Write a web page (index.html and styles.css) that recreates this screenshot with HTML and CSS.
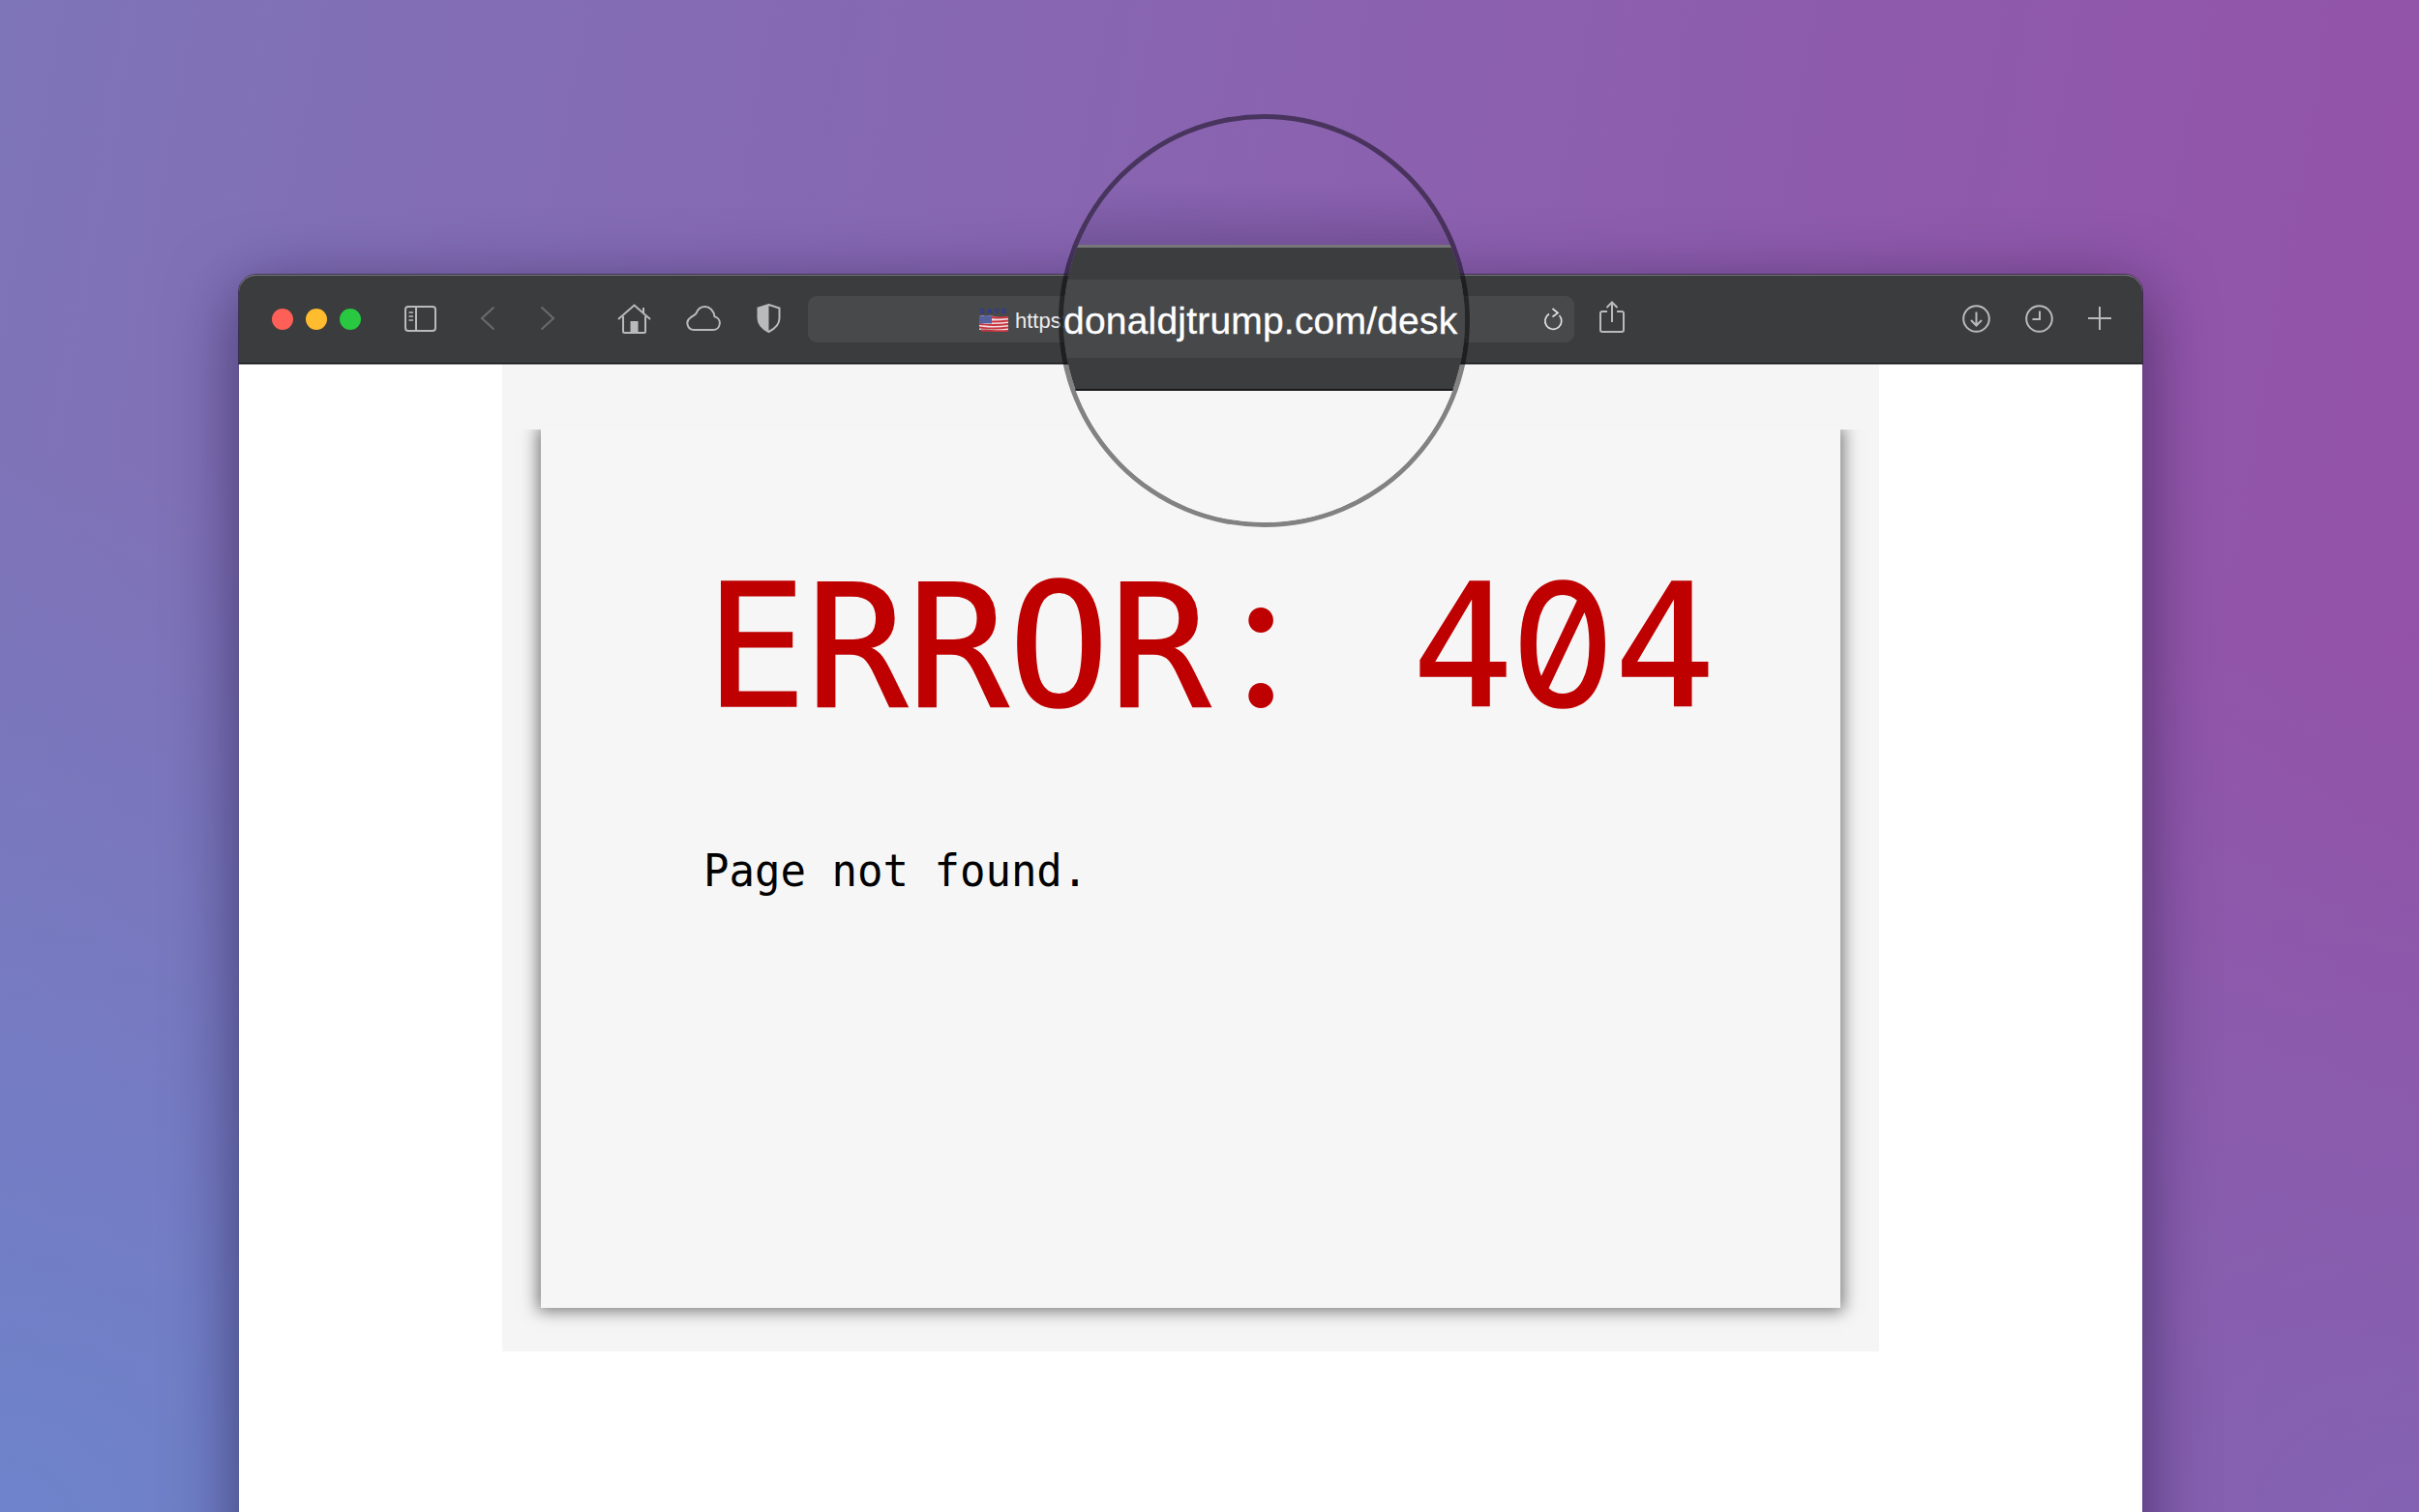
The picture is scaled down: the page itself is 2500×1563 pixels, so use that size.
FILE: index.html
```html
<!DOCTYPE html>
<html lang="en">
<head>
<meta charset="utf-8">
<title>Error 404</title>
<link rel="stylesheet" href="styles.css">
</head>
<body>
<div class="stage">
  <div class="window">
    <header class="toolbar">
      <div class="lights"><span class="light red"></span><span class="light yellow"></span><span class="light green"></span></div>
      <svg class="ic sidebar" width="33" height="27" viewBox="0 0 33 27" fill="none" stroke="#b9babb" stroke-width="2"><rect x="1" y="1" width="31" height="25" rx="3"/><path d="M12 1v25"/><path d="M4.500 7h4.500M4.500 11h4.500M4.500 15h4.500" stroke-width="1.500"/></svg>
      <svg class="ic back" width="16" height="26" viewBox="0 0 16 26" fill="none" stroke="#68696b" stroke-width="2.200"><path d="M14.500 1.500 2 13l12.500 11.500"/></svg>
      <svg class="ic forward" width="16" height="26" viewBox="0 0 16 26" fill="none" stroke="#68696b" stroke-width="2.200"><path d="M1.500 1.500 14 13 1.500 24.500"/></svg>
      <svg class="ic home" width="35" height="31" viewBox="0 0 35 31" fill="none" stroke="#b9babb" stroke-width="2"><path d="M1 16 17.500 1.500 34 16"/><path d="M27 4v6"/><path d="M6 13v15.500a1.500 1.500 0 0 0 1.500 1.500h20a1.500 1.500 0 0 0 1.500-1.500V13"/><rect x="13.500" y="18" width="8" height="12" fill="#b9babb" stroke="none"/></svg>
      <svg class="ic cloud" width="36" height="26" viewBox="0 0 36 26" fill="none" stroke="#b9babb" stroke-width="2"><path d="M8 25h20a7 7 0 0 0 1.500-13.800C28.500 5 24.500 1 19.500 1c-4 0-7.200 2.500-8.600 6.200C9.500 10 6.500 10.500 4.500 12.500A6.800 6.800 0 0 0 8 25z"/></svg>
      <svg class="ic shield" width="25" height="30" viewBox="0 0 25 30"><path d="M12.500 1 23.500 4.500V15c0 6.500-5 11-11 14C6.500 26 1.500 21.500 1.500 15V4.500z" fill="none" stroke="#b9babb" stroke-width="2"/><path d="M12.500 1 1.500 4.500V15c0 6.500 5 11 11 14z" fill="#b9babb"/></svg>
      <div class="url">
        <svg class="flag" width="30" height="26" viewBox="0 0 30 26"><text class="save" x="0" y="7">SAVE</text><g><path d="M0 10q8-2 15 0t15 0v15q-8 1-15-.5T0 24z" fill="#f0dfe2"/><path d="M12 11q9 1 18 0M0 14.500q15 2 30 0M0 18q15 2 30 0M0 21.500q15 2 30 0M2 24.500q14 1 28 .5" fill="none" stroke="#c8343f" stroke-width="1.800"/><path d="M0 10q6-1.500 13-.5v8q-7-.5-13 0z" fill="#55609e"/></g></svg>
        <span class="https">https:</span>
        <svg class="reload" width="22" height="24" viewBox="0 0 22 24" fill="none" stroke="#dedede" stroke-width="1.700"><path d="M6 6.500A8.500 8.500 0 1 0 16.500 8"/><path d="M9.500 1 15 5.500 9.500 9.500"/></svg>
      </div>
      <svg class="ic share" width="26" height="33" viewBox="0 0 26 33" fill="none" stroke="#b9babb" stroke-width="2"><path d="M8 11H3a2 2 0 0 0-2 2v17a2 2 0 0 0 2 2h20a2 2 0 0 0 2-2V13a2 2 0 0 0-2-2h-5"/><path d="M13 22V2M7.500 7 13 1.500 18.500 7"/></svg>
      <svg class="ic download" width="29" height="29" viewBox="0 0 29 29" fill="none" stroke="#b9babb" stroke-width="2"><circle cx="14.500" cy="14.500" r="13.300"/><path d="M14.500 7.500v14M9 16l5.500 5.500L20 16"/></svg>
      <svg class="ic clock" width="29" height="29" viewBox="0 0 29 29" fill="none" stroke="#b9babb" stroke-width="2"><circle cx="14.500" cy="14.500" r="13.300"/><path d="M15 6.500v8.500H7.500"/></svg>
      <svg class="ic plus" width="24" height="24" viewBox="0 0 24 24" fill="none" stroke="#b9babb" stroke-width="2"><path d="M12 0v24M0 12h24"/></svg>
    </header>
    <main class="page">
      <div class="sheet">
        <article class="card">
          <h1 class="title">ERROR<span class="colon">:</span> 4<span class="zero">0</span>4</h1>
          <p class="message">Page not found.</p>
        </article>
      </div>
    </main>
    <div class="lens">
      <div class="lens-sky"></div>
      <div class="lens-band">
        <div class="lens-url">donaldjtrump.com/desk</div>
      </div>
      <div class="lens-page"></div>
    </div>
  </div>
</div>
</body>
</html>
```

FILE: styles.css
```css
* { box-sizing: border-box; }
html, body { margin: 0; height: 100%; }
body {
  overflow: hidden;
  background:
    radial-gradient(1500px 1100px at 0% 100%, rgba(108,132,204,.95), rgba(108,132,204,0) 100%),
    radial-gradient(1300px 900px at 100% 100%, rgba(126,104,182,.75), rgba(126,104,182,0) 100%),
    linear-gradient(100deg, #7e74b8 0%, #8a62b0 50%, #9450a6 100%);
}
.stage { height: 1563px; padding: 284px 286px 0 247px; overflow: hidden; }
.window {
  position: relative;
  height: 1400px;
  background: #fff;
  border-radius: 18px 18px 0 0;
  box-shadow: 0 16px 70px rgba(20,10,50,.55);
}
.toolbar {
  display: flex;
  align-items: center;
  height: 92px;
  padding: 0 32px 0 34px;
  background: #3b3c3e;
  border-radius: 18px 18px 0 0;
  border-top: 1px solid #77777a;
  border-bottom: 1px solid #111;
  outline: 1px solid rgba(20,20,25,.55);
  outline-offset: 0;
  font-family: "Liberation Sans", Arial, sans-serif;
}
.lights { display: flex; gap: 13px; }
.light { width: 22px; height: 22px; border-radius: 50%; }
.red { background: #fe5f57; }
.yellow { background: #febc2e; }
.green { background: #28c840; }
.ic { flex: none; display: block; margin-top: -2px; }
.sidebar { margin-left: 45px; }
.back { margin-left: 45px; }
.forward { margin-left: 46px; }
.home { margin-left: 64px; }
.cloud { margin-left: 36px; }
.shield { margin-left: 37px; }
.url {
  flex: none;
  display: flex;
  align-items: center;
  width: 792px;
  height: 48px;
  margin-left: 28px;
  padding-left: 177px;
  padding-right: 10px;
  background: #48494b;
  border-radius: 9px;
  color: #ececec;
  font-size: 22px;
}
.flag { flex: none; margin-right: 7px; }
.save { font: 700 8px "Liberation Sans", Arial, sans-serif; letter-spacing: 2.4px; fill: #2a37a0; }
.https { padding-top: 3px; line-height: 48px; }
.reload { margin-left: auto; }
.share { margin-left: 26px; margin-top: -5px; }
.download { margin-left: auto; }
.clock { margin-left: 36px; }
.plus { margin-left: 36px; }
.page { height: 1308px; background: #fff; }
.sheet {
  width: 1423px;
  height: 1021px;
  margin-left: 272px;
  padding: 68px 40px 45px;
  background: #f5f5f5;
}
.card {
  height: 908px;
  padding: 126px 0 0 168px;
  background: #f6f6f6;
  box-shadow: 0 0 16px 3px rgba(0,0,0,.52);
  clip-path: inset(0 -30px -30px -30px);
  font-family: "DejaVu Sans Mono", "Liberation Mono", monospace;
}
.title {
  margin: 0 0 0 2px;
  font-size: 174px;
  font-weight: 400;
  line-height: 200px;
  height: 200px;
  letter-spacing: -.4px;
  color: #bf0000;
  white-space: pre;
  -webkit-text-stroke: 1.500px #bf0000;
  transform: scaleY(1.01);
  transform-origin: 0 100%;
}
.colon {
  display: inline-block;
  width: 104.4px;
  font-family: Lato, sans-serif;
  font-size: 205px;
  line-height: 1px;
  text-align: center;
  -webkit-text-stroke: 0;
}
.zero {
  display: inline-block;
  width: 104.4px;
  font-family: Inter, sans-serif;
  font-feature-settings: "zero" 1, "tnum" 1;
  line-height: 1px;
  text-align: center;
  transform: translateX(-5px) scaleX(.97);
}
.message {
  margin: 106px 0 0 0;
  font-size: 44px;
  line-height: 52px;
  color: #000;
  transform: scaleY(1.05);
  transform-origin: 0 100%;
}
.lens {
  position: absolute;
  left: 847px;
  top: -166px;
  display: flex;
  flex-direction: column;
  width: 425px;
  height: 427px;
  border: 5px solid rgba(0,0,0,.47);
  border-radius: 50%;
  overflow: hidden;
  background-clip: padding-box;
  font-family: "Liberation Sans", Arial, sans-serif;
}
.lens-sky {
  flex: none;
  height: 130px;
  background: linear-gradient(to bottom, rgba(30,20,60,0) 50%, rgba(30,20,60,.16) 100%);
}
.lens-band {
  flex: none;
  height: 151px;
  padding-top: 33px;
  background: #3c3d3f;
  border-top: 3px solid #77777a;
  border-bottom: 2px solid #1a1a1a;
}
.lens-url {
  height: 81px;
  padding-top: 3px;
  padding-right: 8px;
  background: #47484a;
  color: #fff;
  font-size: 39px;
  line-height: 80px;
  letter-spacing: .2px;
  white-space: nowrap;
  text-align: center;
  -webkit-text-stroke: .3px #fff;
}
.lens-page { flex: 1; background: #f6f6f6; }
```
